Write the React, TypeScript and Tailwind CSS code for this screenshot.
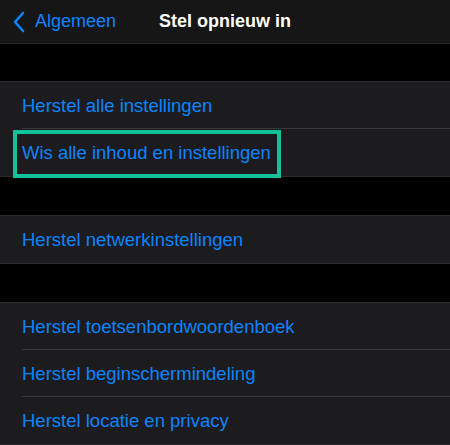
import React from 'react';

const Row = ({ label, sep = false }: { label: string; sep?: boolean }) => (
  <div className="relative h-[47px] flex items-center pl-[22px]">
    <span className="text-[18.5px] text-[#0a84ff]">{label}</span>
    {sep && <div className="absolute bottom-0 left-[22px] right-0 h-px bg-[#38383a]" />}
  </div>
);

const Group = ({ children }: { children: React.ReactNode }) => (
  <div className="bg-[#1c1c1e] border-y border-[#2c2c2e]">{children}</div>
);

export default function App() {
  return (
    <div className="w-[450px] h-[445px] bg-black overflow-hidden" style={{ fontFamily: '"Liberation Sans", Arial, sans-serif' }}>
      <div className="relative h-[44px] bg-[#161616] border-b border-[#2a2a2a] flex items-center justify-center">
        <div className="absolute left-[12px] top-0 h-full flex items-center gap-[9px] text-[#0a84ff]">
          <svg width="14" height="22" viewBox="0 0 14 22" fill="none">
            <path d="M11 2 L3 11 L11 20" stroke="#0a84ff" strokeWidth="2.6" strokeLinecap="round" strokeLinejoin="round" />
          </svg>
          <span className="text-[18px]">Algemeen</span>
        </div>
        <span className="text-[18px] font-bold text-white">Stel opnieuw in</span>
      </div>
      <div className="h-[37px]" />
      <Group>
        <Row label="Herstel alle instellingen" sep />
        <div className="relative">
          <Row label="Wis alle inhoud en instellingen" />
          <div className="absolute left-[13px] top-[1px] w-[268px] h-[48px] border-[4px] border-[#10c29a]" />
        </div>
      </Group>
      <div className="h-[38px]" />
      <Group>
        <Row label="Herstel netwerkinstellingen" />
      </Group>
      <div className="h-[38px]" />
      <Group>
        <Row label="Herstel toetsenbordwoordenboek" sep />
        <Row label="Herstel beginschermindeling" sep />
        <Row label="Herstel locatie en privacy" />
      </Group>
    </div>
  );
}
